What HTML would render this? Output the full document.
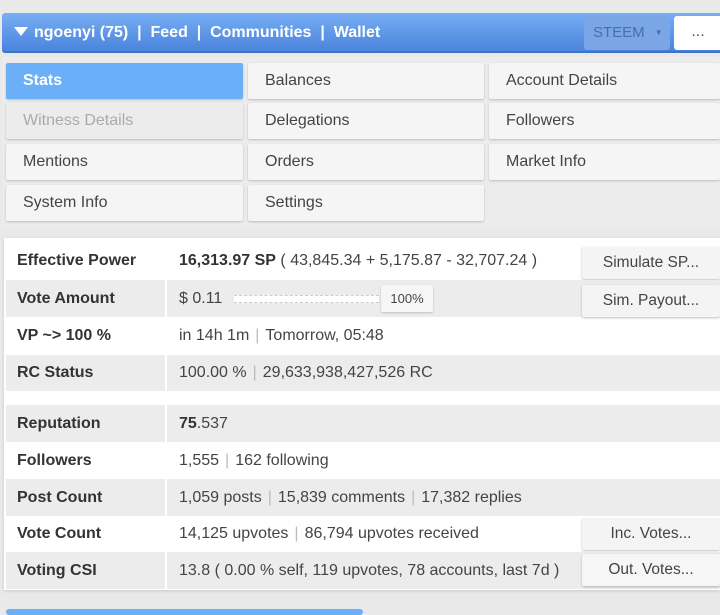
<!DOCTYPE html>
<html><head><style>
*{box-sizing:border-box;margin:0;padding:0}
body{width:720px;height:613px;background:#e9e9e9;font-family:"Liberation Sans",sans-serif;position:relative;overflow:hidden;color:#333}
.hdr{position:absolute;left:2px;top:13px;width:718px;height:40px;background:linear-gradient(#78aef5,#4a84dc);border-radius:3px 0 0 3px;border-bottom:2px solid #3f74c4}
.hdr .t{position:absolute;left:12px;top:11px;color:#fff;font-weight:bold;font-size:16px;white-space:nowrap}
.tri{display:inline-block;width:0;height:0;border-left:7px solid transparent;border-right:7px solid transparent;border-top:9px solid #fff;margin-right:6px;vertical-align:1px}
.st{position:absolute;left:582px;top:3px;width:86px;height:34px;background:#7aa5e6;border-radius:3px;color:#4a6ea8;font-size:15px;line-height:34px;padding-left:9px}
.st span{font-size:8px;margin-left:10px;vertical-align:2px}
.dots{position:absolute;left:672px;top:3px;width:48px;height:34px;background:#fff;border-radius:3px 0 0 3px;text-align:center;line-height:32px;color:#555}
.panel{position:absolute;left:2px;top:57px;width:718px;height:171px;background:#ececec}
.b{position:absolute;height:36px;background:#f5f5f5;border-radius:2px;box-shadow:0 1px 2px rgba(0,0,0,.2);font-size:16px;line-height:35px;padding-left:17px;color:#444}
.tbl{position:absolute;left:4px;top:238px;width:716px;height:352px;background:#fff;box-shadow:0 1px 3px rgba(0,0,0,.15)}
.r{position:absolute;left:2px;width:714px;font-size:16px}
.r.g{background:#ececec}
.r .l{position:absolute;left:0;top:0;bottom:0;width:161px;padding-left:11px;font-weight:bold;color:#333;border-right:2px solid #fff;display:flex;align-items:center;font-size:16px}
.r .v{position:absolute;left:173px;top:0;bottom:0;display:flex;align-items:center;white-space:nowrap;color:#444;font-size:16px}
.s{color:#bbb;margin:0 6px}
.btn{position:absolute;right:0;width:138px;height:32px;background:#f4f4f4;border-radius:2px;box-shadow:0 1px 2px rgba(0,0,0,.25);text-align:center;line-height:31px;font-size:15.5px;color:#444}
</style></head><body>
<div class="hdr"><div class="t"><span class="tri"></span>ngoenyi (75) &nbsp;| &nbsp;Feed &nbsp;| &nbsp;Communities &nbsp;| &nbsp;Wallet</div>
<div class="st">STEEM<span>▼</span></div><div class="dots">...</div></div>
<div class="panel"></div>
<div class="b" style="left:6px;top:63px;width:237px;background:#6aaff8;color:#fff;font-weight:bold">Stats</div>
<div class="b" style="left:248px;top:63px;width:236px">Balances</div>
<div class="b" style="left:489px;top:63px;width:231px">Account Details</div>
<div class="b" style="left:6px;top:103px;width:237px;background:#ececec;color:#aaa">Witness Details</div>
<div class="b" style="left:248px;top:103px;width:236px">Delegations</div>
<div class="b" style="left:489px;top:103px;width:231px">Followers</div>
<div class="b" style="left:6px;top:144px;width:237px">Mentions</div>
<div class="b" style="left:248px;top:144px;width:236px">Orders</div>
<div class="b" style="left:489px;top:144px;width:231px">Market Info</div>
<div class="b" style="left:6px;top:185px;width:237px">System Info</div>
<div class="b" style="left:248px;top:185px;width:236px">Settings</div>
<div class="tbl">
<div class="r" style="top:3px;height:39px"><div class="l">Effective Power</div><div class="v"><b style="color:#333">16,313.97 SP</b>&nbsp;( 43,845.34 + 5,175.87 - 32,707.24 )</div><div class="btn" style="top:6px">Simulate SP...</div></div>
<div class="r g" style="top:42px;height:37px"><div class="l">Vote Amount</div><div class="v">$ 0.11<span style="display:inline-block;width:145px;border-top:1px dashed #ccc;border-bottom:1px dashed #ccc;height:8px;margin-left:12px;background:#fff"></span></div><div style="position:absolute;left:375px;top:5px;width:52px;height:27px;background:#f6f6f6;border-radius:2px;box-shadow:0 1px 2px rgba(0,0,0,.2);font-size:13px;line-height:27px;text-align:center;color:#444">100%</div><div class="btn" style="top:5px">Sim. Payout...</div></div>
<div class="r" style="top:79px;height:38px"><div class="l">VP ~&gt; 100 %</div><div class="v">in 14h 1m<span class="s">|</span>Tomorrow, 05:48</div></div>
<div class="r g" style="top:117px;height:36px"><div class="l">RC Status</div><div class="v">100.00 %<span class="s">|</span>29,633,938,427,526 RC</div></div>
<div class="r" style="top:153px;height:14px"><div class="l"></div></div>
<div class="r g" style="top:167px;height:37px"><div class="l">Reputation</div><div class="v"><b style="color:#333">75</b>.537</div></div>
<div class="r" style="top:204px;height:37px"><div class="l">Followers</div><div class="v">1,555<span class="s">|</span>162 following</div></div>
<div class="r g" style="top:241px;height:37px"><div class="l">Post Count</div><div class="v">1,059 posts<span class="s">|</span>15,839 comments<span class="s">|</span>17,382 replies</div></div>
<div class="r" style="top:278px;height:36px"><div class="l">Vote Count</div><div class="v">14,125 upvotes<span class="s">|</span>86,794 upvotes received</div><div class="btn" style="top:2px">Inc. Votes...</div></div>
<div class="r g" style="top:314px;height:37px"><div class="l">Voting CSI</div><div class="v">13.8 ( 0.00 % self, 119 upvotes, 78 accounts, last 7d )</div><div class="btn" style="top:2px;background:#f6f6f6">Out. Votes...</div></div>
</div>
<div style="position:absolute;left:6px;top:609px;width:357px;height:6px;background:#6aaff8;border-radius:3px"></div>
</body></html>
